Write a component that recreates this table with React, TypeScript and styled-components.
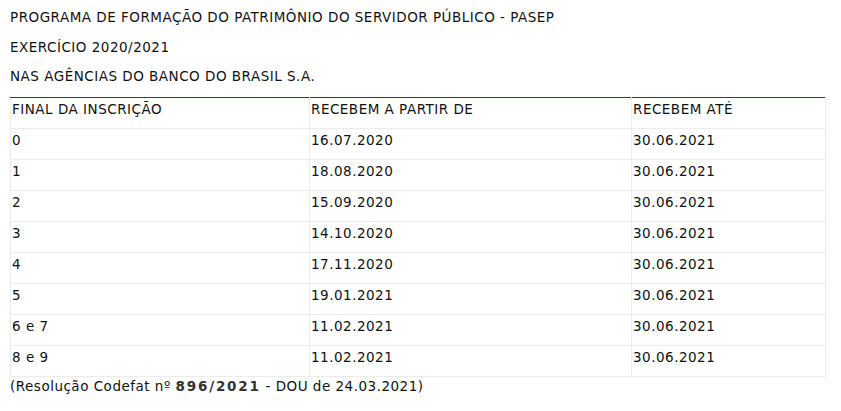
import styled, { createGlobalStyle } from "styled-components";

const GlobalStyle = createGlobalStyle`
  body {
    margin: 0;
    background: #ffffff;
    font-family: "DejaVu Sans", Verdana, sans-serif;
    color: #111111;
  }
`;

const Page = styled.div`
  padding: 9px 10px 0 10px;
  font-size: 13.5px;
  letter-spacing: 0.5px;
  line-height: 16px;
`;

const Line = styled.p`
  margin: 0 0 13.5px 0;
`;

const Table = styled.table`
  border-collapse: collapse;
  width: 816px;
  margin-top: -0.5px;
`;

const Cell = styled.td<{ $width?: number }>`
  width: ${(p) => (p.$width ? `${p.$width}px` : "auto")};
  height: 31px;
  box-sizing: border-box;
  padding: 3px 1px 0 1px;
  vertical-align: top;
  border: 1px solid #ececec;
  border-top: none;
`;

const HeadCell = styled(Cell).attrs({ as: "th" })`
  font-weight: normal;
  text-align: left;
  border-top: 1px solid #8a1c1c;
`;

const Note = styled.p`
  margin: 1px 0 0 0;
`;

const Strong = styled.b`
  color: #333333;
  letter-spacing: 1.8px;
`;

const rows = [
  ["0", "16.07.2020", "30.06.2021"],
  ["1", "18.08.2020", "30.06.2021"],
  ["2", "15.09.2020", "30.06.2021"],
  ["3", "14.10.2020", "30.06.2021"],
  ["4", "17.11.2020", "30.06.2021"],
  ["5", "19.01.2021", "30.06.2021"],
  ["6 e 7", "11.02.2021", "30.06.2021"],
  ["8 e 9", "11.02.2021", "30.06.2021"],
];

export default function App() {
  return (
    <>
      <GlobalStyle />
      <Page>
        <Line>PROGRAMA DE FORMAÇÃO DO PATRIMÔNIO DO SERVIDOR PÚBLICO - PASEP</Line>
        <Line>EXERCÍCIO 2020/2021</Line>
        <Line>NAS AGÊNCIAS DO BANCO DO BRASIL S.A.</Line>
        <Table>
          <thead>
            <tr>
              <HeadCell $width={299}>FINAL DA INSCRIÇÃO</HeadCell>
              <HeadCell $width={322}>RECEBEM A PARTIR DE</HeadCell>
              <HeadCell>RECEBEM ATÉ</HeadCell>
            </tr>
          </thead>
          <tbody>
            {rows.map((r) => (
              <tr key={r[0]}>
                <Cell>{r[0]}</Cell>
                <Cell>{r[1]}</Cell>
                <Cell>{r[2]}</Cell>
              </tr>
            ))}
          </tbody>
        </Table>
        <Note>
          (Resolução Codefat nº <Strong>896/2021</Strong> - DOU de 24.03.2021)
        </Note>
      </Page>
    </>
  );
}
